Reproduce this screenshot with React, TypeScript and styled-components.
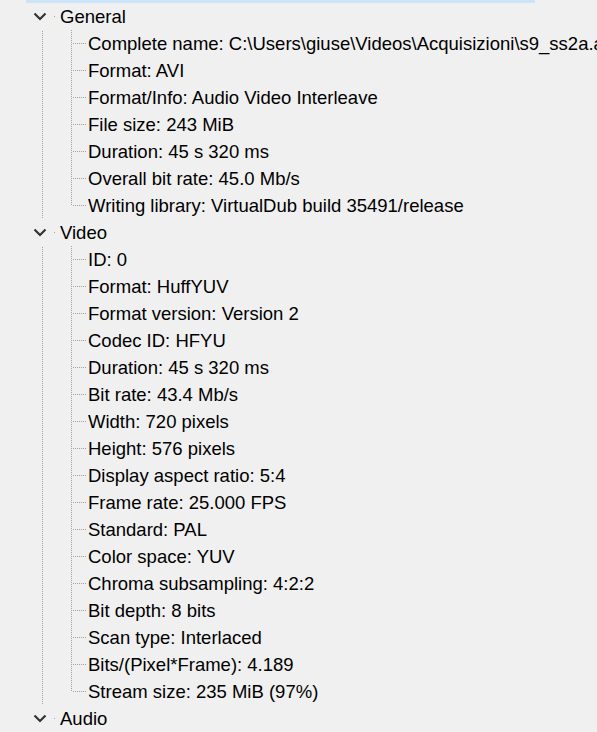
import React from "react";
import styled, { createGlobalStyle } from "styled-components";

const GlobalStyle = createGlobalStyle`
  html, body {
    margin: 0;
    padding: 0;
    background: #f0f0f0;
    overflow: hidden;
  }
`;

const DOTS_V = "repeating-linear-gradient(to bottom, #a0a0a0 0 1px, transparent 1px 2px)";
const DOTS_H = "repeating-linear-gradient(to right, #a0a0a0 0 1px, transparent 1px 2px)";

const Tree = styled.div`
  display: flex;
  flex-direction: column;
  width: 597px;
  height: 732px;
  overflow: hidden;
  font-family: "Liberation Sans", Arial, sans-serif;
  font-size: 18.5px;
  color: #000;
  white-space: nowrap;
  background-image: ${DOTS_V};
  background-size: 1px calc(100% - 14px);
  background-position: 42px 3px;
  background-repeat: no-repeat;
`;

const SelectedTail = styled.div`
  height: 3px;
  width: 509px;
  margin-left: 26px;
  background: #cce4f7;
  flex-shrink: 0;
`;

const Node = styled.div`
  display: flex;
  flex-direction: column;
`;

const TopRow = styled.div`
  display: flex;
  align-items: center;
  height: 27px;
  padding-left: 33px;
  flex-shrink: 0;
`;

const Expander = styled.span`
  display: flex;
  align-items: center;
  flex-shrink: 0;
  width: 18px;
  height: 27px;
  background: #f0f0f0;
`;

const StubDot = styled.span`
  flex-shrink: 0;
  width: 9px;
  height: 1px;
  background: linear-gradient(to right, transparent 3px, #a0a0a0 3px 4px, transparent 4px);
`;

const Children = styled.div`
  display: flex;
  flex-direction: column;
  background-image: ${DOTS_V};
  background-size: 1px calc(100% - 13px);
  background-position: 71px 0;
  background-repeat: no-repeat;
`;

const LeafRow = styled.div`
  display: flex;
  align-items: center;
  height: 27px;
  padding-left: 73px;
  flex-shrink: 0;
`;

const Branch = styled.span`
  flex-shrink: 0;
  width: 13px;
  height: 1px;
  background-image: ${DOTS_H};
`;

const Label = styled.span<{ $gap: number }>`
  flex-shrink: 0;
  margin-left: ${(p) => p.$gap}px;
  line-height: 27px;
`;

const Chevron = () => (
  <svg width="14" height="9" viewBox="0 0 14 9">
    <polyline
      points="1.5,1.5 7,7 12.5,1.5"
      fill="none"
      stroke="#333"
      strokeWidth="2.2"
    />
  </svg>
);

type Section = { title: string; items: string[] };

const sections: Section[] = [
  {
    title: "General",
    items: [
      "Complete name: C:\\Users\\giuse\\Videos\\Acquisizioni\\s9_ss2a.avi",
      "Format: AVI",
      "Format/Info: Audio Video Interleave",
      "File size: 243 MiB",
      "Duration: 45 s 320 ms",
      "Overall bit rate: 45.0 Mb/s",
      "Writing library: VirtualDub build 35491/release",
    ],
  },
  {
    title: "Video",
    items: [
      "ID: 0",
      "Format: HuffYUV",
      "Format version: Version 2",
      "Codec ID: HFYU",
      "Duration: 45 s 320 ms",
      "Bit rate: 43.4 Mb/s",
      "Width: 720 pixels",
      "Height: 576 pixels",
      "Display aspect ratio: 5:4",
      "Frame rate: 25.000 FPS",
      "Standard: PAL",
      "Color space: YUV",
      "Chroma subsampling: 4:2:2",
      "Bit depth: 8 bits",
      "Scan type: Interlaced",
      "Bits/(Pixel*Frame): 4.189",
      "Stream size: 235 MiB (97%)",
    ],
  },
  { title: "Audio", items: [] },
];

export default function App() {
  return (
    <>
      <GlobalStyle />
      <Tree>
        <SelectedTail />
        {sections.map((s) => (
          <Node key={s.title}>
            <TopRow>
              <Expander>
                <Chevron />
              </Expander>
              <StubDot />
              <Label $gap={0}>{s.title}</Label>
            </TopRow>
            {s.items.length > 0 && (
              <Children>
                {s.items.map((it, i) => (
                  <LeafRow key={i}>
                    <Branch />
                    <Label $gap={2}>{it}</Label>
                  </LeafRow>
                ))}
              </Children>
            )}
          </Node>
        ))}
      </Tree>
    </>
  );
}
